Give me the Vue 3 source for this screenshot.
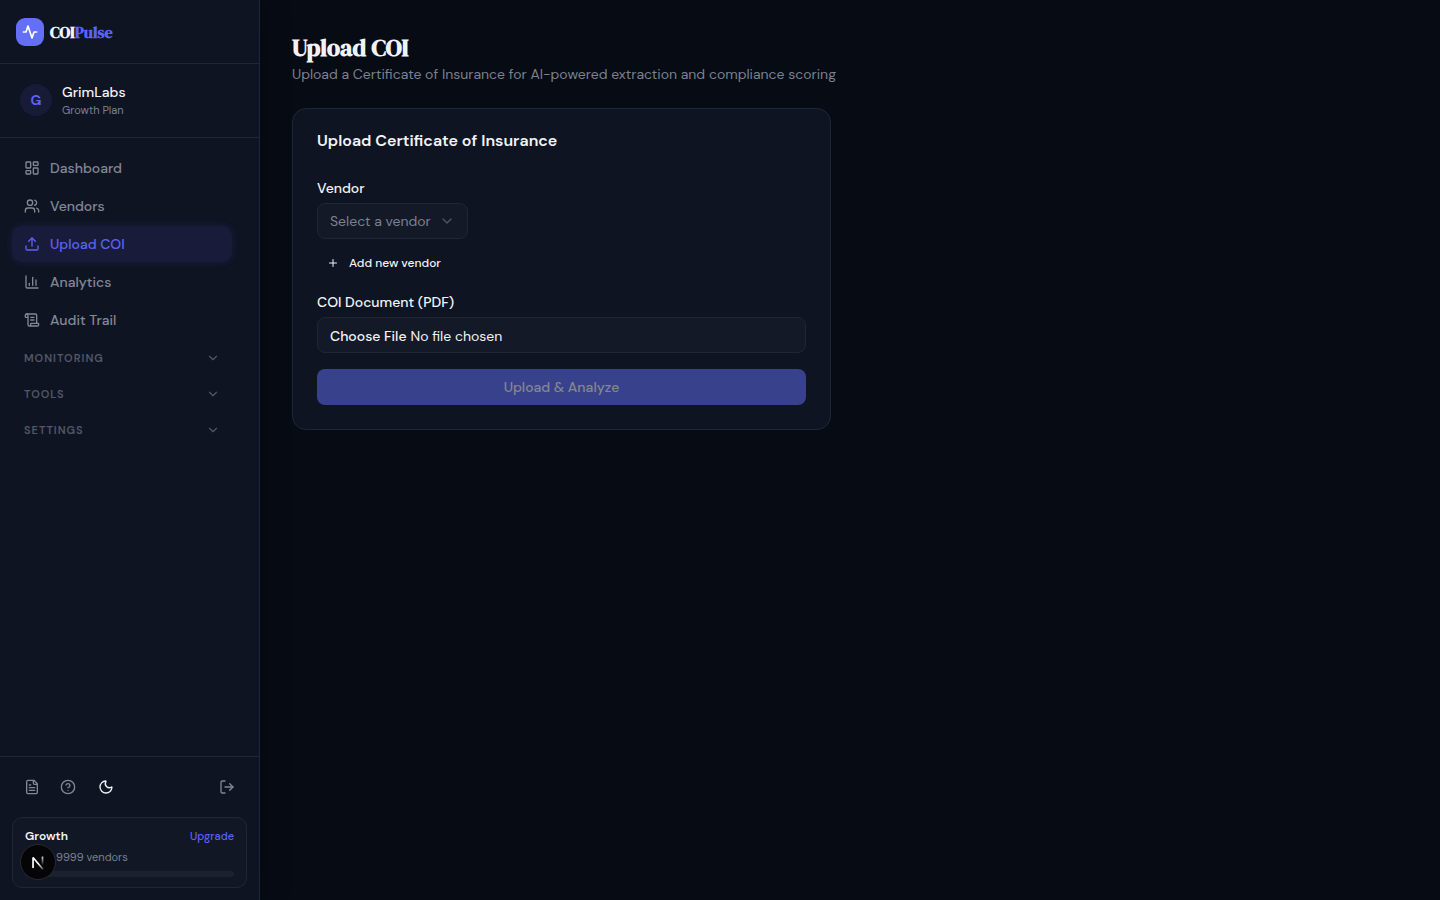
<script setup>
import { ref } from 'vue';

const vendor = ref('');

const navItems = [
  { name: 'Dashboard', icon: 'dashboard' },
  { name: 'Vendors', icon: 'users' },
  { name: 'Upload COI', icon: 'upload', active: true },
  { name: 'Analytics', icon: 'chart' },
  { name: 'Audit Trail', icon: 'scroll' },
];

const groups = ref([
  { name: 'Monitoring', open: false },
  { name: 'Tools', open: false },
  { name: 'Settings', open: false },
]);

const icons = {
  dashboard: [
    'M4 3h5a1 1 0 0 1 1 1v7a1 1 0 0 1-1 1H4a1 1 0 0 1-1-1V4a1 1 0 0 1 1-1z',
    'M15 3h5a1 1 0 0 1 1 1v3a1 1 0 0 1-1 1h-5a1 1 0 0 1-1-1V4a1 1 0 0 1 1-1z',
    'M15 12h5a1 1 0 0 1 1 1v7a1 1 0 0 1-1 1h-5a1 1 0 0 1-1-1v-7a1 1 0 0 1 1-1z',
    'M4 16h5a1 1 0 0 1 1 1v3a1 1 0 0 1-1 1H4a1 1 0 0 1-1-1v-3a1 1 0 0 1 1-1z',
  ],
  users: [
    'M16 21v-2a4 4 0 0 0-4-4H6a4 4 0 0 0-4 4v2',
    'M13 7a4 4 0 1 1-8 0 4 4 0 0 1 8 0z',
    'M16 3.128a4 4 0 0 1 0 7.744',
    'M22 21v-2a4 4 0 0 0-3-3.87',
  ],
  upload: ['M12 3v12', 'm17 8-5-5-5 5', 'M21 15v4a2 2 0 0 1-2 2H5a2 2 0 0 1-2-2v-4'],
  chart: ['M3 3v16a2 2 0 0 0 2 2h16', 'M18 17V9', 'M13 17V5', 'M8 17v-3'],
  scroll: [
    'M15 12h-5',
    'M15 8h-5',
    'M19 17V5a2 2 0 0 0-2-2H4',
    'M8 21h12a2 2 0 0 0 2-2v-1a1 1 0 0 0-1-1H11a1 1 0 0 0-1 1v1a2 2 0 1 1-4 0V5a2 2 0 1 0-4 0v2a1 1 0 0 0 1 1h3',
  ],
};
</script>

<template>
  <div class="layout">
    <aside class="sidebar">
      <div class="logo">
        <span class="logo__mark">
          <svg class="icon icon--bold" viewBox="0 0 24 24">
            <path d="M22 12h-4l-3 9L9 3l-3 9H2" />
          </svg>
        </span>
        <span class="logo__text">COI<span class="logo__accent">Pulse</span></span>
      </div>

      <div class="org">
        <span class="org__avatar">G</span>
        <div>
          <div class="org__name">GrimLabs</div>
          <div class="org__plan">Growth Plan</div>
        </div>
      </div>

      <nav class="nav">
        <a
          v-for="item in navItems"
          :key="item.name"
          href="#"
          class="nav__item"
          :class="{ 'nav__item--active': item.active }"
        >
          <svg class="icon" viewBox="0 0 24 24">
            <path v-for="d in icons[item.icon]" :key="d" :d="d" />
          </svg>
          {{ item.name }}
        </a>
        <div class="nav__groups">
          <button
            v-for="group in groups"
            :key="group.name"
            type="button"
            class="nav__group"
            :aria-expanded="group.open"
            @click="group.open = !group.open"
          >
            {{ group.name }}
            <svg class="icon icon--chevron" viewBox="0 0 24 24"><path d="m6 9 6 6 6-6" /></svg>
          </button>
        </div>
      </nav>

      <div class="footer">
        <div class="footer__actions">
          <button type="button" class="footer__button" aria-label="Documentation">
            <svg class="icon" viewBox="0 0 24 24">
              <path d="M15 2H6a2 2 0 0 0-2 2v16a2 2 0 0 0 2 2h12a2 2 0 0 0 2-2V7Z" />
              <path d="M14 2v4a2 2 0 0 0 2 2h4" />
              <path d="M10 9H8" />
              <path d="M16 13H8" />
              <path d="M16 17H8" />
            </svg>
          </button>
          <button type="button" class="footer__button" aria-label="Help">
            <svg class="icon" viewBox="0 0 24 24">
              <circle cx="12" cy="12" r="10" />
              <path d="M9.09 9a3 3 0 0 1 5.83 1c0 2-3 3-3 3" />
              <path d="M12 17h.01" />
            </svg>
          </button>
          <button type="button" class="footer__button footer__button--theme" aria-label="Toggle theme">
            <svg class="icon" viewBox="0 0 24 24">
              <path d="M20.985 12.486a9 9 0 1 1-9.473-9.472c.405-.022.617.46.402.803a6 6 0 0 0 8.268 8.268c.344-.215.825-.004.803.401" />
            </svg>
          </button>
          <button type="button" class="footer__button footer__button--logout" aria-label="Log out">
            <svg class="icon" viewBox="0 0 24 24">
              <path d="m16 17 5-5-5-5" />
              <path d="M21 12H9" />
              <path d="M9 21H5a2 2 0 0 1-2-2V5a2 2 0 0 1 2-2h4" />
            </svg>
          </button>
        </div>
        <div class="plan">
          <div class="plan__row">
            <span class="plan__name">Growth</span>
            <a href="#" class="plan__upgrade">Upgrade</a>
          </div>
          <div class="plan__usage">9999 vendors</div>
          <div class="plan__bar"></div>
        </div>
      </div>
    </aside>

    <main class="content">
      <h1 class="content__title">Upload COI</h1>
      <p class="content__subtitle">Upload a Certificate of Insurance for AI-powered extraction and compliance scoring</p>

      <!-- Upload form -->
      <section class="card">
        <h2 class="card__title">Upload Certificate of Insurance</h2>
        <form class="form" @submit.prevent>
          <div class="form__field">
            <label for="vendor" class="form__label">Vendor</label>
            <div class="form__select-wrap">
              <select id="vendor" v-model="vendor" class="form__select">
                <option value="">Select a vendor</option>
              </select>
              <svg class="icon form__chevron" viewBox="0 0 24 24"><path d="m6 9 6 6 6-6" /></svg>
            </div>
            <button type="button" class="form__add">
              <svg class="icon icon--small" viewBox="0 0 24 24"><path d="M5 12h14" /><path d="M12 5v14" /></svg>
              Add new vendor
            </button>
          </div>
          <div class="form__field">
            <label for="document" class="form__label">COI Document (PDF)</label>
            <input id="document" type="file" accept="application/pdf" class="form__file" />
          </div>
          <button type="submit" class="form__submit" disabled>Upload &amp; Analyze</button>
        </form>
      </section>
    </main>

    <button type="button" class="devtools" aria-label="Open dev tools">
      <svg class="devtools__icon" viewBox="0 0 16 16">
        <defs>
          <linearGradient id="fade-diagonal" x1="9" y1="9" x2="13" y2="14" gradientUnits="userSpaceOnUse">
            <stop offset="0" stop-color="#fff" />
            <stop offset="1" stop-color="#fff" stop-opacity="0.3" />
          </linearGradient>
          <linearGradient id="fade-stem" x1="12" y1="2" x2="12" y2="11" gradientUnits="userSpaceOnUse">
            <stop offset="0" stop-color="#fff" />
            <stop offset="1" stop-color="#fff" stop-opacity="0" />
          </linearGradient>
        </defs>
        <path d="M3.6 13.3V4l8.8 10.5" fill="none" stroke="url(#fade-diagonal)" stroke-width="1.5" stroke-linejoin="bevel" />
        <path d="M12 3.2V11" fill="none" stroke="url(#fade-stem)" stroke-width="1.5" />
      </svg>
    </button>
  </div>
</template>

<style>
body {
  margin: 0;
  background-color: #070b14;
}
</style>

<style scoped>
* {
  box-sizing: border-box;
}
.layout {
  display: flex;
  min-height: 100vh;
  font-family: "DM Sans", Inter, sans-serif;
  font-size: 14px;
  line-height: 20px;
  color: #f1f3f7;
  background-color: #070b14;
}
button, select, input {
  font-family: inherit;
}
button {
  border: none;
  background: none;
  cursor: pointer;
}
a {
  text-decoration: none;
}
.icon {
  width: 16px;
  height: 16px;
  flex-shrink: 0;
  fill: none;
  stroke: currentColor;
  stroke-width: 2;
  stroke-linecap: round;
  stroke-linejoin: round;
}
.icon--small {
  width: 12px;
  height: 12px;
}
.icon--chevron {
  width: 14px;
  height: 14px;
}
.icon--bold {
  stroke-width: 2.5;
}
.sidebar {
  display: flex;
  flex-direction: column;
  flex-shrink: 0;
  width: 260px;
  height: 100vh;
  background-color: #0f1423;
  border-right: 1px solid #20263a;
  box-shadow: 4px 0 24px rgba(0, 0, 0, 0.3);
}
.logo {
  display: flex;
  align-items: center;
  gap: 6px;
  height: 64px;
  padding: 0 16px;
  border-bottom: 1px solid #20263a;
}
.logo__mark {
  display: flex;
  align-items: center;
  justify-content: center;
  width: 28px;
  height: 28px;
  color: #fff;
  background-color: #636ff6;
  border-radius: 9px;
}
.logo__text {
  font-family: "DM Serif Display", "Liberation Serif", serif;
  font-size: 16px;
  font-weight: bold;
}
.logo__accent {
  color: #5b63f5;
}
.org {
  display: flex;
  align-items: center;
  gap: 10px;
  padding: 18px 20px 19px;
  border-bottom: 1px solid #20263a;
}
.org__avatar {
  display: flex;
  align-items: center;
  justify-content: center;
  width: 32px;
  height: 32px;
  font-weight: bold;
  color: #5b63f5;
  background-color: #181b38;
  border-radius: 50%;
}
.org__name {
  font-weight: 500;
}
.org__plan {
  font-size: 11px;
  line-height: 16px;
  color: #7b818f;
}
.nav {
  display: flex;
  flex-direction: column;
  flex: 1;
  gap: 2px;
  padding: 12px 27px 12px 12px;
}
.nav__item {
  display: flex;
  align-items: center;
  gap: 10px;
  height: 36px;
  padding: 0 12px;
  font-weight: 500;
  color: #828896;
  border-radius: 10px;
}
.nav__item--active {
  color: #5b63f5;
  background-color: #181c3a;
  box-shadow: 0 0 8px rgba(91, 99, 245, 0.12);
}
.nav__groups {
  display: flex;
  flex-direction: column;
}
.nav__group {
  display: flex;
  align-items: center;
  justify-content: space-between;
  height: 36px;
  padding: 0 12px;
  font-size: 11px;
  font-weight: 600;
  letter-spacing: 1px;
  text-transform: uppercase;
  color: #525866;
}
.footer {
  padding: 12px;
  border-top: 1px solid #20263a;
}
.footer__actions {
  display: flex;
  align-items: center;
  gap: 4px;
  margin-bottom: 12px;
  padding: 2px 4px;
}
.footer__button {
  display: flex;
  align-items: center;
  justify-content: center;
  width: 32px;
  height: 32px;
  padding: 0;
  color: #828896;
}
.footer__button--theme {
  width: 36px;
  color: #f1f3f7;
}
.footer__button--logout {
  margin-left: auto;
}
.plan {
  padding: 8px 12px 10px;
  background-color: #121725;
  border: 1px solid #20263a;
  border-radius: 10px;
}
.plan__row {
  display: flex;
  justify-content: space-between;
  margin-bottom: 1px;
  font-size: 12px;
}
.plan__name {
  font-weight: 600;
}
.plan__upgrade {
  font-size: 11px;
  font-weight: 500;
  color: #5b63f5;
}
.plan__usage {
  margin-bottom: 4px;
  padding-left: 31px;
  font-size: 11px;
  color: #7b818f;
}
.plan__bar {
  height: 6px;
  background-color: #1c2130;
  border-radius: 3px;
}
.content {
  flex: 1;
  padding: 32px;
}
.content__title {
  margin: 0;
  font-family: "DM Serif Display", "Liberation Serif", serif;
  font-size: 24px;
  line-height: 32px;
}
.content__subtitle {
  margin: 0 0 24px;
  color: #7b818f;
}
.card {
  max-width: 539px;
  padding: 20px 24px 24px;
  background-color: #0f1423;
  border: 1px solid #20263a;
  border-radius: 14px;
}
.card__title {
  margin: 0 0 28px;
  font-size: 16px;
  font-weight: 600;
  line-height: 24px;
}
.form {
  display: flex;
  flex-direction: column;
  gap: 16px;
}
.form__field {
  display: flex;
  flex-direction: column;
  align-items: flex-start;
  gap: 8px;
}
.form__label {
  font-weight: 500;
  line-height: 14px;
}
.form__select-wrap {
  position: relative;
}
.form__select {
  display: block;
  width: 151px;
  height: 36px;
  padding: 0 12px;
  font-size: 14px;
  color: #7b818f;
  background-color: #141928;
  border: 1px solid #20263a;
  border-radius: 8px;
  appearance: none;
}
.form__chevron {
  position: absolute;
  top: 10px;
  right: 13px;
  color: #4f5563;
  pointer-events: none;
}
.form__add {
  display: flex;
  align-items: center;
  gap: 10px;
  height: 32px;
  padding: 0 10px;
  font-size: 12px;
  font-weight: 500;
  color: #f1f3f7;
}
.form__file {
  width: 100%;
  height: 36px;
  padding: 8px 12px;
  font-size: 14px;
  line-height: 20px;
  color: #f1f3f7;
  background-color: #141928;
  border: 1px solid #20263a;
  border-radius: 8px;
}
.form__file::file-selector-button {
  margin: 0 4px 0 0;
  padding: 0;
  font-family: inherit;
  font-size: 14px;
  font-weight: 500;
  color: #f1f3f7;
  background: none;
  border: none;
}
.form__submit {
  height: 36px;
  font-size: 14px;
  font-weight: 500;
  color: #85878f;
  background-color: #38428c;
  border-radius: 8px;
}
.devtools {
  position: fixed;
  bottom: 20px;
  left: 20px;
  display: flex;
  align-items: center;
  justify-content: center;
  width: 36px;
  height: 36px;
  padding: 0;
  background-color: #050507;
  border: 1px solid #2b2b2e;
  border-radius: 50%;
}
.devtools__icon {
  width: 18px;
  height: 18px;
}
</style>
